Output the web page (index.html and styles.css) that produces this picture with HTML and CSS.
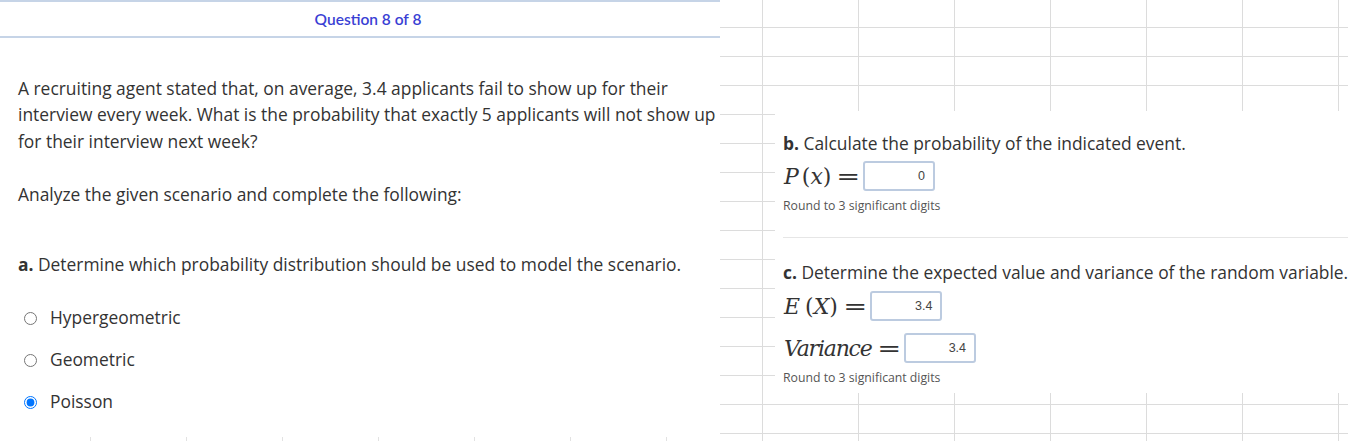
FILE: index.html
```html
<!DOCTYPE html>
<html lang="en">
<head>
<meta charset="utf-8">
<title>Question 8 of 8</title>
<link rel="stylesheet" href="styles.css">
</head>
<body>
<div class="page">
  <div class="left">
    <div class="qhead">Question 8 of 8</div>
    <div class="qbody">
      <p class="stem">A recruiting agent stated that, on average, 3.4 applicants fail to show up for their interview every week. What is the probability that exactly 5 applicants will not show up for their interview next week?</p>
      <p class="instr">Analyze the given scenario and complete the following:</p>
      <p class="part"><b>a.</b> Determine which probability distribution should be used to model the scenario.</p>
      <ul class="opts">
        <li><label class="opt"><input type="radio" name="dist"><span>Hypergeometric</span></label></li>
        <li><label class="opt"><input type="radio" name="dist"><span>Geometric</span></label></li>
        <li><label class="opt"><input type="radio" name="dist" checked><span>Poisson</span></label></li>
      </ul>
    </div>
    <div class="ticks"></div>
  </div>
  <div class="right">
    <div class="panel">
      <p class="part"><b>b.</b> Calculate the probability of the indicated event.</p>
      <div class="mrow mrow-p">
        <span class="math"><i>P</i><span class="sp"></span>(<i>x</i>)<span class="eq">=</span></span>
        <span class="box">0</span>
      </div>
      <p class="hint">Round to 3 significant digits</p>
      <div class="sep"></div>
      <p class="part part-c"><b>c.</b> Determine the expected value and variance of the random variable.</p>
      <div class="mrow mrow-e">
        <span class="math"><i>E</i><span class="sp"></span>(<i>X</i>)<span class="eq">=</span></span>
        <span class="box">3.4</span>
      </div>
      <div class="mrow mrow-v">
        <span class="math"><i class="var">Variance</i><span class="eq">=</span></span>
        <span class="box">3.4</span>
      </div>
      <p class="hint hint-last">Round to 3 significant digits</p>
    </div>
  </div>
</div>
</body>
</html>
```

FILE: styles.css
```css
html, body {
  margin: 0;
  padding: 0;
  background: #ffffff;
}

body {
  font-family: "Open Sans", "Noto Sans", sans-serif;
  color: #333333;
  font-size: 17.4px;
}

.page {
  display: flex;
  width: 1348px;
  height: 441px;
  overflow: hidden;
}

.left {
  width: 720px;
  flex: none;
  display: flex;
  flex-direction: column;
  background: #ffffff;
}

.qhead {
  border-top: 2px solid #c6d4e7;
  border-bottom: 2px solid #c6d4e7;
  box-sizing: content-box;
  height: 33px;
  line-height: 33px;
  padding: 1px 0 0 16px;
  text-align: center;
  font-family: Lato, "Open Sans", sans-serif;
  font-size: 15.5px;
  font-weight: 600;
  color: #3a3fd4;
}

.qbody {
  flex: 1;
  padding: 0 18px;
}

p {
  margin: 0;
  line-height: 26.5px;
}

.stem {
  margin-top: 36.5px;
  width: 702px;
}

.instr {
  margin-top: 27px;
}

.qbody .part {
  margin-top: 43.5px;
}

.part b {
  font-weight: 700;
}

.opts {
  list-style: none;
  margin: 19px 0 0 0;
  padding: 0;
  display: flex;
  flex-direction: column;
}

.opts li {
  height: 42px;
  display: flex;
  align-items: center;
}

.opt {
  display: flex;
  align-items: center;
  line-height: 26.5px;
}

.opt input {
  width: 13px;
  height: 13px;
  margin: 1px 13.5px 0 5.5px;
}

.ticks {
  height: 4px;
  background-image: linear-gradient(to right, #e2e2e2 1px, transparent 1px);
  background-size: 96px 4px;
  background-position: 90px 0;
}

.right {
  flex: 1;
  background-color: #ffffff;
  background-image:
    linear-gradient(to right, #dcdcdc 1px, transparent 1px),
    linear-gradient(to bottom, #dcdcdc 1px, transparent 1px);
  background-size: 96px 29px, 96px 29px;
  background-position: 42px 0, 0 27px;
  padding: 111px 0 0 55px;
}

.panel {
  background: #ffffff;
  height: 282px;
  padding: 19px 0 0 8px;
  box-sizing: border-box;
  white-space: nowrap;
}

.mrow {
  display: flex;
  align-items: center;
  height: 30px;
}

.mrow-p {
  margin-top: 4.75px;
}

.mrow-e {
  margin-top: 5.75px;
}

.mrow-v {
  margin-top: 12px;
}

.math {
  font-family: "DejaVu Serif", "Liberation Serif", serif;
  font-size: 22px;
  color: #333333;
  display: flex;
  align-items: center;
  padding-left: 1px;
}

.math i {
  font-style: italic;
}

.math .var {
  letter-spacing: -1.2px;
}

.sp {
  display: inline-block;
  width: 5px;
}

.mrow-p .sp {
  width: 3px;
}

.mrow-p .eq {
  margin-right: 5px;
}

.eq {
  margin: 0 6px 0 8px;
  transform: scaleX(1.3);
}

.box {
  display: inline-block;
  box-sizing: border-box;
  width: 72px;
  height: 30px;
  border: 2px solid #bccbe0;
  border-radius: 3px;
  text-align: right;
  padding-right: 8px;
  font-family: "Liberation Sans", Arial, sans-serif;
  font-size: 12.5px;
  line-height: 26px;
  color: #444444;
}

.hint {
  margin-top: 6px;
  font-size: 12.25px;
  line-height: 18px;
  color: #555555;
}

.sep {
  margin-top: 22px;
  height: 1px;
  background: #e6e6e6;
}

.part-c {
  margin-top: 20.75px;
}

.hint-last {
  margin-top: 6px;
}
```
